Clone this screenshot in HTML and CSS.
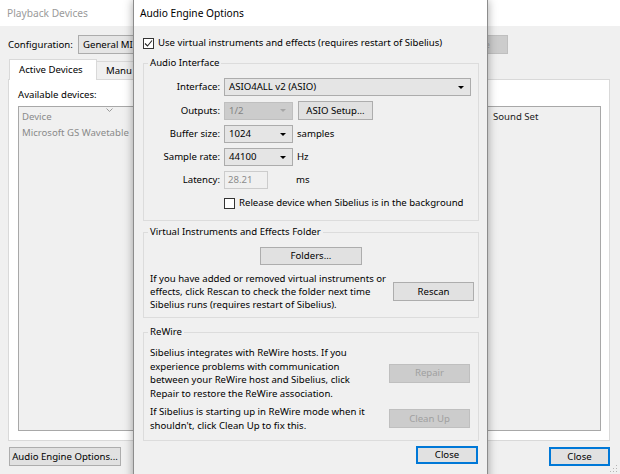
FILE: index.html
```html
<!DOCTYPE html>
<html lang="en">
  <head>
    <meta charset="UTF-8" />
    <meta name="viewport" content="width=device-width, initial-scale=1.0" />
    <title>Audio Engine Options</title>
    <link rel="stylesheet" href="styles.css">
  </head>
  <body>
    <div class="window">
      <div class="titlebar dim">Playback Devices</div>
      <div class="config">
        <span class="config-label">Configuration:</span>
        <div class="combo config-combo"><span>General MI</span><span class="arrow"></span></div>
        <button class="btn disabled config-btn">Delete</button>
      </div>
      <div class="tabs">
        <div class="tab active">Active Devices</div>
        <div class="tab">Manu</div>
      </div>
      <div class="panel">
        <div class="panel-label">Available devices:</div>
        <div class="list">
          <div class="list-head">
            <span class="col-device">Device</span>
            <svg class="sort" width="7" height="4" viewBox="0 0 7 4"><polyline points="0.5,0.5 3.5,3.5 6.5,0.5" fill="none" stroke="#9a9a9a" stroke-width="1"/></svg>
            <span class="col-set">Sound Set</span>
          </div>
          <div class="list-row">Microsoft GS Wavetable</div>
        </div>
      </div>
      <div class="footer">
        <button class="btn engine-btn">Audio Engine Options...</button>
        <button class="btn default">Close</button>
      </div>
      <svg class="grip" width="8" height="8" viewBox="0 0 8 8">
        <rect x="6" y="0" width="1" height="1" fill="#b5b5b5"/>
        <rect x="3" y="3" width="1" height="1" fill="#b5b5b5"/>
        <rect x="6" y="3" width="1" height="1" fill="#b5b5b5"/>
        <rect x="0" y="6" width="1" height="1" fill="#b5b5b5"/>
        <rect x="3" y="6" width="1" height="1" fill="#b5b5b5"/>
        <rect x="6" y="6" width="1" height="1" fill="#b5b5b5"/>
      </svg>
    </div>

    <div class="dialog">
      <div class="titlebar">Audio Engine Options</div>
      <div class="dialog-body">
        <label class="check-row">
          <span class="checkbox">
            <svg width="9" height="9" viewBox="0 0 9 9"><polyline points="1,4.5 3.5,7 8,1.5" fill="none" stroke="#222" stroke-width="1.1"/></svg>
          </span>
          Use virtual instruments and effects (requires restart of Sibelius)
        </label>

        <fieldset class="group">
          <legend>Audio Interface</legend>
          <div class="form-grid">
            <span class="field-label">Interface:</span>
            <div class="combo combo-full"><span>ASIO4ALL v2 (ASIO)</span><span class="arrow"></span></div>

            <span class="field-label">Outputs:</span>
            <div class="field-line">
              <div class="combo combo-short disabled"><span>1/2</span><span class="arrow"></span></div>
              <button class="btn asio-btn">ASIO Setup...</button>
            </div>

            <span class="field-label">Buffer size:</span>
            <div class="field-line">
              <div class="combo combo-short"><span>1024</span><span class="arrow"></span></div>
              <span class="unit">samples</span>
            </div>

            <span class="field-label">Sample rate:</span>
            <div class="field-line">
              <div class="combo combo-short"><span>44100</span><span class="arrow"></span></div>
              <span class="unit">Hz</span>
            </div>

            <span class="field-label">Latency:</span>
            <div class="field-line">
              <div class="textbox">28.21</div>
              <span class="unit unit-ms">ms</span>
            </div>

            <label class="check-row release">
              <span class="checkbox"></span>
              Release device when Sibelius is in the background
            </label>
          </div>
        </fieldset>

        <fieldset class="group folder-group">
          <legend>Virtual Instruments and Effects Folder</legend>
          <button class="btn folders-btn">Folders...</button>
          <div class="text-row">
            <p>If you have added or removed virtual instruments or<br>effects, click Rescan to check the folder next time<br>Sibelius runs (requires restart of Sibelius).</p>
            <button class="btn side-btn">Rescan</button>
          </div>
        </fieldset>

        <fieldset class="group rewire-group">
          <legend>ReWire</legend>
          <div class="text-row">
            <p>Sibelius integrates with ReWire hosts. If you<br>experience problems with communication<br>between your ReWire host and Sibelius, click<br>Repair to restore the ReWire association.</p>
            <button class="btn side-btn rewire-btn disabled">Repair</button>
          </div>
          <div class="text-row second">
            <p>If Sibelius is starting up in ReWire mode when it<br>shouldn't, click Clean Up to fix this.</p>
            <button class="btn side-btn rewire-btn disabled">Clean Up</button>
          </div>
        </fieldset>

        <div class="dialog-footer">
          <button class="btn default close-btn">Close</button>
        </div>
      </div>
    </div>
  </body>
</html>
```

FILE: styles.css
```css
body {
  margin: 0;
  width: 620px;
  height: 474px;
  overflow: hidden;
  position: relative;
  background-color: #f0f0f0;
  font-family: "Noto Sans", "Open Sans", sans-serif;
  font-size: 9.6px;
  line-height: 14px;
  color: #000;
}

button {
  font-family: inherit;
  font-size: inherit;
  line-height: 14px;
  color: #000;
  padding: 0;
  white-space: nowrap;
}

.window {
  height: 474px;
  position: relative;
}

.titlebar {
  height: 26px;
  line-height: 26px;
  padding-left: 7px;
  background-color: #fff;
  font-size: 10.2px;
}

.titlebar.dim {
  color: #9a9a9a;
}

/* background window */
.config {
  display: flex;
  align-items: center;
  margin-top: 9px;
  padding-left: 8px;
  height: 19px;
}

.config-label {
  width: 70px;
}

.combo {
  display: flex;
  align-items: center;
  justify-content: space-between;
  box-sizing: border-box;
  height: 18px;
  padding: 0 6px 0 4px;
  background-color: #e5e5e5;
  border: 1px solid #acacac;
}

.arrow {
  width: 0;
  height: 0;
  border-left: 3px solid transparent;
  border-right: 3px solid transparent;
  border-top: 3px solid #000;
}

.config-combo {
  width: 330px;
  height: 19px;
}

.btn {
  box-sizing: border-box;
  height: 18px;
  background-color: #e1e1e1;
  border: 1px solid #adadad;
}

.btn.disabled {
  background-color: #cccccc;
  border-color: #bfbfbf;
  color: #a0a0a0;
}

.btn.default {
  border-color: #0078d7;
  box-shadow: inset 0 0 0 1px #0078d7;
}

.config-btn {
  width: 80px;
  height: 19px;
  margin-left: 20px;
  text-align: right;
  padding-right: 17px;
}

.tabs {
  display: flex;
  align-items: flex-end;
  margin-top: 5px;
  padding-left: 9px;
  height: 21px;
}

.tab {
  box-sizing: border-box;
  height: 19px;
  padding: 0 9px;
  line-height: 18px;
  border: 1px solid #d9d9d9;
  border-bottom: none;
  white-space: nowrap;
}

.tab.active {
  height: 21px;
  line-height: 20px;
  background-color: #fff;
  position: relative;
  z-index: 1;
  width: 88px;
}

.tab:not(.active) {
  border-left: none;
  width: 60px;
  padding-right: 0;
}

.panel {
  box-sizing: border-box;
  width: 602px;
  height: 362px;
  margin: -1px 0 0 8px;
  padding: 8px 8px 0 9px;
  background-color: #fff;
  border: 1px solid #d9d9d9;
}

.panel-label {
  height: 14px;
  margin-bottom: 4px;
}

.list {
  box-sizing: border-box;
  height: 325px;
  background-color: #f0f0f0;
  border: 1px solid #a8a8a8;
  color: #8a8a8a;
}

.list-head {
  display: flex;
  height: 16px;
  padding: 3px 0 0 3px;
}

.col-device {
  width: 84px;
}

.sort {
  margin-top: -2px;
}

.col-set {
  margin-left: auto;
  width: 107px;
  color: #222;
}

.list-row {
  padding-left: 3px;
}

.footer {
  display: flex;
  justify-content: space-between;
  margin-top: 6px;
  padding: 0 10px 0 9px;
}

.footer .btn {
  height: 19px;
}

.engine-btn {
  width: 112px;
}

.footer .default {
  width: 61px;
}

.grip {
  position: absolute;
  right: 2px;
  bottom: 1px;
}

/* dialog on top */
.dialog {
  position: absolute;
  top: 0;
  left: 133px;
  width: 353px;
  height: 490px;
  background-color: #f0f0f0;
  border: 1px solid #8c8c8c;
  border-top: none;
  box-shadow: 0 0 9px rgba(0, 0, 0, 0.35);
}

.dialog .titlebar {
  padding-left: 6px;
}

.dialog-body {
  padding: 11px 8px 0 9px;
}

.check-row {
  display: flex;
  align-items: center;
  height: 12px;
  gap: 4px;
  white-space: nowrap;
}

.checkbox {
  display: flex;
  align-items: center;
  justify-content: center;
  box-sizing: border-box;
  width: 11px;
  height: 11px;
  background-color: #fff;
  border: 1px solid #333;
}

.group {
  margin: 7px 0 0;
  padding: 8px 0 11px;
  border: 1px solid #dcdcdc;
  min-width: 0;
}

.group legend {
  margin-left: 4px;
  padding: 0 2px;
  line-height: 14px;
}

.form-grid {
  display: grid;
  grid-template-columns: 76px 1fr;
  column-gap: 4px;
  row-gap: 5px;
  padding-right: 7px;
  align-items: center;
}

.field-label {
  text-align: right;
}

.field-line {
  display: flex;
  align-items: center;
}

.combo-short {
  width: 69px;
}

.combo.disabled {
  background-color: #cccccc;
  border-color: #bfbfbf;
  color: #838383;
}

.combo.disabled .arrow {
  border-top-color: #a6a6a6;
}

.asio-btn {
  width: 75px;
  height: 19px;
  margin-left: 5px;
}

.unit {
  margin-left: 4px;
}

.unit.unit-ms {
  margin-left: 28px;
}

.textbox {
  box-sizing: border-box;
  width: 44px;
  height: 18px;
  padding-left: 3px;
  line-height: 16px;
  background-color: #f0f0f0;
  border: 1px solid #cccccc;
  color: #8c8c8c;
}

.check-row.release {
  grid-column: 2;
  margin-top: 3px;
}

.folder-group {
  margin-top: 4px;
  padding: 8px 0 6px;
}

.folders-btn {
  display: block;
  width: 102px;
  margin: 0 auto;
}

.text-row {
  display: flex;
  align-items: center;
  justify-content: space-between;
  padding: 0 4px 0 6px;
}

.folder-group .text-row {
  margin-top: 7px;
  line-height: 13px;
}

.text-row p {
  margin: 0;
  white-space: nowrap;
}

.side-btn {
  width: 81px;
  height: 19px;
  flex: none;
}

.rewire-group {
  margin-top: 7px;
  padding: 7px 0 8px;
  line-height: 13.5px;
}

.rewire-group .text-row {
  padding-right: 8px;
}

.text-row.second {
  margin-top: 5px;
}

.dialog-footer {
  display: flex;
  justify-content: flex-end;
  margin-top: 5px;
  padding-right: 1px;
}

.close-btn {
  width: 62px;
}
```
